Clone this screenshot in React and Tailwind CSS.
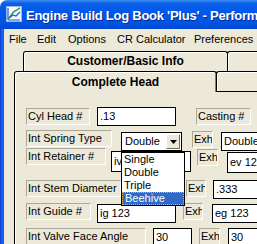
export default function App() {
  const lbl =
    'h-[17px] shrink-0 border border-t-[#ACA899] border-l-[#ACA899] border-b-white border-r-white pl-[1px] text-[11px] leading-[14px] whitespace-nowrap overflow-hidden';
  const inp =
    'shrink-0 flex items-center border border-black bg-white pl-[2px] text-[11px] leading-[13px] whitespace-nowrap overflow-hidden';

  return (
    <div className="w-[257px] h-[244px] overflow-hidden flex flex-col bg-white text-black font-['Liberation_Sans',Arial,sans-serif]">
      {/* title bar */}
      <div className="h-[29px] shrink-0 flex items-start rounded-tl-[7px] bg-[linear-gradient(to_bottom,#3C8EF3_0%,#0B5FE6_12%,#0058EE_40%,#0054E3_80%,#0047D0_100%)]">
        <svg className="mt-[6px] ml-[6px] shrink-0" width="16" height="16" viewBox="0 0 16 16">
          <rect x="0.5" y="0.5" width="15" height="15" fill="#F4F8FF" stroke="#9AB4E0" />
          <path d="M2 14 L2 2 M2 14 L14 14" stroke="#2452C8" strokeWidth="1.2" fill="none" />
          <path d="M2 13 C5 11 6 6 9 5 C11 4 12 3 14 2" stroke="#1FA23A" strokeWidth="1.4" fill="none" />
          <path d="M3 12 L7 9 L10 10 L14 6" stroke="#1E5BE0" strokeWidth="1.2" fill="none" />
        </svg>
        <span className="ml-[4px] pt-[8px] text-[13px] leading-[15px] font-bold tracking-[-0.25px] text-white whitespace-nowrap [text-shadow:1px_1px_#0A2A8C]">
          Engine Build Log Book 'Plus' - Performance
        </span>
      </div>

      <div className="flex-1 flex min-h-0">
        {/* window frame */}
        <div className="w-[4px] shrink-0 bg-[linear-gradient(to_right,#0831D9,#166AEE_50%,#0855DD)]" />

        <div className="flex-1 flex flex-col bg-[#ECE9D8] min-w-0">
          {/* menu bar */}
          <div className="h-[21px] shrink-0 flex pl-[5px] pt-[4px] text-[11px] leading-[13px] whitespace-nowrap">
            <span className="w-[28px] shrink-0">File</span>
            <span className="w-[31px] shrink-0">Edit</span>
            <span className="w-[49px] shrink-0">Options</span>
            <span className="w-[77px] shrink-0">CR Calculator</span>
            <span className="shrink-0">Preferences</span>
          </div>

          {/* tab row 1 */}
          <div className="h-[20px] mt-[1px] shrink-0 flex">
            <div className="ml-[19px] w-[205px] shrink-0 border border-b-0 border-black rounded-t-[3px] shadow-[inset_1px_1px_white] text-center font-bold text-[12px] leading-[14px] pt-[2px] whitespace-nowrap">
              Customer/Basic Info
            </div>
            <div className="-ml-px flex-1 border-t border-l border-black rounded-tl-[3px] shadow-[inset_1px_1px_white]" />
          </div>

          {/* tab row 2 */}
          <div className="h-[21px] shrink-0 flex">
            <div className="ml-[10px] w-[203px] shrink-0 border-t border-l border-r border-black rounded-t-[3px] shadow-[inset_1px_1px_white,inset_-1px_0_#808080] text-center font-bold text-[12px] leading-[14px] pt-[3px] whitespace-nowrap">
              Complete Head
            </div>
            <div className="-ml-px flex-1 border-t border-l border-b border-black rounded-tl-[3px] shadow-[inset_1px_1px_white]" />
          </div>

          {/* panel */}
          <div className="ml-[10px] flex-1 border-l border-black shadow-[inset_1px_0_white] pl-[11px] pt-[15px] min-h-0">
            {/* row 1 */}
            <div className="h-[23px] flex items-start">
              <div className={`${lbl} w-[64px] mt-px`}>Cyl Head #</div>
              <div className={`${inp} w-[79px] h-[19px] ml-[7px]`}>.13</div>
              <div className={`${lbl} w-[55px] ml-[20px] mt-px`}>Casting #</div>
            </div>

            {/* row 2 */}
            <div className="h-[18px] flex items-start">
              <div className={`${lbl} w-[86px]`}>Int Spring Type</div>
              <div className="relative ml-[9px] mt-[2px] w-[61px] h-[19px] shrink-0 flex border border-black bg-white text-[11px] leading-[13px]">
                <span className="pl-[3px] pt-[2px]">Double</span>
                <div className="ml-auto mt-px mr-px w-[14px] h-[15px] flex items-center justify-center bg-[#ECE9D8] border border-t-white border-l-white border-b-[#716F64] border-r-[#716F64]">
                  <svg width="7" height="4" viewBox="0 0 7 4">
                    <polygon points="0,0 7,0 3.5,4" fill="black" />
                  </svg>
                </div>
                {/* open list */}
                <div className="absolute left-[-1px] top-[19px] z-10 w-[64px] border border-black bg-white">
                  <div className="h-[13px] leading-[13px] pl-[2px]">Single</div>
                  <div className="h-[13px] leading-[13px] pl-[2px]">Double</div>
                  <div className="h-[13px] leading-[13px] pl-[2px]">Triple</div>
                  <div className="h-[13px] leading-[11px] pl-[2px] bg-[#316AC5] text-white border border-dotted border-[#E8B04A]">
                    Beehive
                  </div>
                </div>
              </div>
              <div className={`${lbl} w-[21px] ml-[10px] mt-px`}>Exh</div>
              <div className={`${inp} w-[60px] h-[19px] ml-[8px] mt-[2px]`}>Double</div>
            </div>

            {/* row 3 */}
            <div className="h-[32px] flex items-start">
              <div className={`${lbl} w-[80px]`}>Int Retainer #</div>
              <div className={`${inp} w-[80px] h-[21px] ml-[5px] mt-[3px]`}>iv 123</div>
              <div className={`${lbl} w-[21px] ml-[6px] mt-px`}>Exh</div>
              <div className={`${inp} w-[60px] h-[21px] ml-[9px] mt-[4px]`}>ev 123</div>
            </div>

            {/* row 4 */}
            <div className="h-[23px] flex items-start">
              <div className={`${lbl} w-[95px]`}>Int Stem Diameter</div>
              <div className={`${lbl} w-[20px] ml-[65px]`}>Exh</div>
              <div className={`${inp} w-[60px] h-[19px] ml-[7px]`}>.333</div>
            </div>

            {/* row 5 */}
            <div className="h-[25px] flex items-start">
              <div className={`${lbl} w-[65px]`}>Int Guide #</div>
              <div className={`${inp} w-[79px] h-[19px] ml-[6px] mt-px`}>ig 123</div>
              <div className={`${lbl} w-[20px] ml-[7px]`}>Exh</div>
              <div className={`${inp} w-[60px] h-[19px] ml-[9px] mt-px`}>eg 123</div>
            </div>

            {/* row 6 */}
            <div className="h-[20px] flex items-start">
              <div className={`${lbl} w-[120px]`}>Int Valve Face Angle</div>
              <div className={`${inp} w-[39px] h-[19px] ml-[7px]`}>30</div>
              <div className={`${lbl} w-[21px] ml-[7px]`}>Exh</div>
              <div className={`${inp} w-[60px] h-[19px] ml-[8px]`}>30</div>
            </div>
          </div>
        </div>
      </div>
    </div>
  );
}
